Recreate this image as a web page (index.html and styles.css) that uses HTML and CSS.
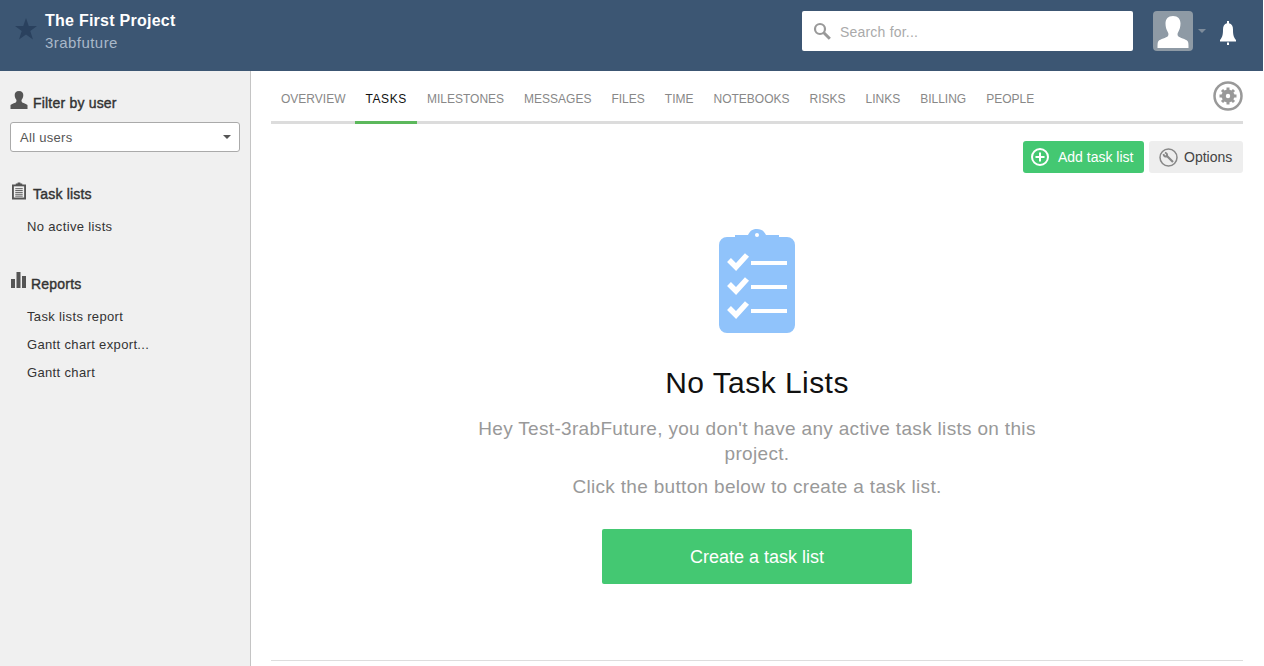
FILE: index.html
```html
<!DOCTYPE html>
<html>
<head>
    <meta charset="UTF-8">
    <meta name="viewport" content="width=device-width, initial-scale=1.0">
    <title>The First Project - Tasks</title>
    <link rel="stylesheet" href="styles.css">
</head>
<body>
    <header class="topbar">
        <svg class="star" viewBox="0 0 24 24"><path d="M12 0l3 8.800h9l-7.300 5.500 2.900 9.200-7.600-5.600-7.600 5.600 2.900-9.200L0 8.800h9z"/></svg>
        <div class="project">
            <div class="project-name">The First Project</div>
            <div class="project-company">3rabfuture</div>
        </div>
        <div class="search">
            <svg class="search-icon" viewBox="0 0 18 18"><circle cx="7" cy="7" r="5" fill="none" stroke="#999" stroke-width="2.200"/><path d="M10.800 10.800l6 6" stroke="#999" stroke-width="3"/></svg>
            <span class="search-text">Search for...</span>
        </div>
        <div class="avatar">
            <svg viewBox="0 0 40 40"><path fill="#fff" d="M20 5c-5 0-7.500 3-7.500 7.500 0 3 .8 6 2 8 1 1.500 1.300 3 .5 4.500-1.500 2-8 3-9.500 5-1 1.300-1 3-1 7h31c0-4 0-5.700-1-7-1.500-2-8-3-9.500-5-.8-1.500-.5-3 .5-4.500 1.200-2 2-5 2-8C27.500 8 25 5 20 5z"/></svg>
        </div>
        <span class="avatar-caret"></span>
        <svg class="bell" viewBox="0 0 16 24"><path fill="#fff" d="M7 0h2v2.200c3 .6 4 3 4 6.300 0 5 .5 7.500 3 10.500v1.500H0V19c2.500-3 3-5.500 3-10.500 0-3.300 1-5.700 4-6.300zM7 21.500h2V24H7z"/></svg>
    </header>

    <div class="layout">
        <aside class="sidebar">
            <h3 class="side-title first">
                <svg class="side-icon" viewBox="0 0 18 18"><path fill="#555" d="M9 0c-3 0-4.300 1.700-4.300 4 0 2 .8 3.600 1.500 4.600.5 1 .4 2-.5 2.800-1 .8-4.700 1.400-5.200 2.800V18h17v-3.800c-.5-1.400-4.200-2-5.200-2.800-.9-.8-1-1.800-.5-2.800.7-1 1.500-2.600 1.500-4.600C13.300 1.700 12 0 9 0z"/></svg>
                Filter by user
            </h3>
            <div class="user-select">
                <span>All users</span>
                <span class="select-caret"></span>
            </div>

            <h3 class="side-title lists">
                <svg class="side-icon" viewBox="0 0 15 18"><path fill="#555" d="M0 2h4V1h2V0h3v1h2v1h4v16H0z"/><path fill="#f0f0f0" d="M2 4h11v12H2z"/><path stroke="#555" stroke-width="1" d="M3.500 6.500h8M3.500 8.500h8M3.500 10.500h8M3.500 12.500h8M3.500 14.500h8"/></svg>
                Task lists
            </h3>
            <div class="side-link">No active lists</div>

            <h3 class="side-title reports">
                <svg class="side-icon" viewBox="0 0 15 16"><path fill="#555" d="M0 7h4v9H0zM5.500 0h4v16h-4zM11 4h4v12h-4z"/></svg>
                Reports
            </h3>
            <div class="side-link">Task lists report</div>
            <div class="side-link">Gantt chart export...</div>
            <div class="side-link">Gantt chart</div>
        </aside>

        <main class="content">
            <nav class="tabs">
                <a class="tab">OVERVIEW</a>
                <a class="tab active">TASKS</a>
                <a class="tab">MILESTONES</a>
                <a class="tab">MESSAGES</a>
                <a class="tab">FILES</a>
                <a class="tab">TIME</a>
                <a class="tab">NOTEBOOKS</a>
                <a class="tab">RISKS</a>
                <a class="tab">LINKS</a>
                <a class="tab">BILLING</a>
                <a class="tab">PEOPLE</a>
                <svg class="gear" viewBox="0 0 30 30">
                    <circle cx="15" cy="15" r="13.500" fill="none" stroke="#999" stroke-width="2.500"/>
                    <circle cx="15" cy="15" r="4.500" fill="none" stroke="#999" stroke-width="4"/>
                    <path stroke="#999" stroke-width="3" d="M15 6.500v17M6.500 15h17M9 9l12 12M21 9L9 21"/>
                    <circle cx="15" cy="15" r="2.200" fill="#fff"/>
                </svg>
            </nav>

            <div class="actions">
                <button class="btn btn-green">
                    <svg class="btn-icon" viewBox="0 0 18 18"><circle cx="9" cy="9" r="8" fill="none" stroke="#fff" stroke-width="2"/><path stroke="#fff" stroke-width="2" d="M9 4.500v9M4.500 9h9"/></svg>
                    Add task list
                </button>
                <button class="btn btn-grey">
                    <svg class="btn-icon" viewBox="0 0 19 19"><circle cx="9.500" cy="9.500" r="8.500" fill="none" stroke="#888" stroke-width="1.500"/><path stroke="#888" stroke-width="2.200" d="M7 7l7 7"/><path fill="none" stroke="#888" stroke-width="1.800" d="M4.500 6c.3 2 1.500 3 3.500 2.500C8.500 6.500 7.500 5 6 4.500"/></svg>
                    Options
                </button>
            </div>

            <section class="empty">
                <svg class="empty-icon" viewBox="0 0 76 104">
                    <path fill="#90c3fb" d="M16 6h13c2-4.500 5-6 9-6s7 1.500 9 6h13v2h8a8 8 0 0 1 8 8v80a8 8 0 0 1-8 8H8a8 8 0 0 1-8-8V16a8 8 0 0 1 8-8h8z"/>
                    <circle cx="38" cy="6" r="2" fill="#fff"/>
                    <path fill="none" stroke="#fff" stroke-width="5.500" d="M10 31l7 7 11-12M10 55l7 7 11-12M10 79l7 7 11-12"/>
                    <path stroke="#fff" stroke-width="4" d="M32 34h36M32 58h36M32 82h36"/>
                </svg>
                <h2 class="empty-title">No Task Lists</h2>
                <p class="empty-text">Hey Test-3rabFuture, you don't have any active task lists on this project.</p>
                <p class="empty-text hint">Click the button below to create a task list.</p>
                <button class="create-btn">Create a task list</button>
            </section>
            <div class="bottom-rule"></div>
        </main>
    </div>
</body>
</html>
```

FILE: styles.css
```css
* {
    box-sizing: border-box;
}

html, body {
    height: 100%;
}

body {
    margin: 0;
    padding-right: 1px;
    overflow: hidden;
    background: #fff;
    font-family: "Liberation Sans", Arial, sans-serif;
    color: #333;
}

.topbar {
    display: flex;
    align-items: flex-start;
    height: 71px;
    background: #3c5673;
}

.star {
    width: 22px;
    height: 22px;
    margin: 18px 0 0 15px;
    fill: #2a415e;
}

.project {
    margin: 11px 0 0 8px;
    flex: 1;
}

.project-name {
    font-size: 16px;
    line-height: 19px;
    font-weight: bold;
    letter-spacing: .25px;
    color: #fff;
}

.project-company {
    margin-top: 4px;
    font-size: 15px;
    line-height: 18px;
    letter-spacing: .45px;
    color: #a9b8c9;
}

.search {
    display: flex;
    align-items: center;
    width: 331px;
    height: 40px;
    margin-top: 11px;
    padding-left: 11px;
    background: #fff;
    border-radius: 2px;
}

.search-icon {
    width: 18px;
    height: 18px;
}

.search-text {
    margin-left: 9px;
    padding-top: 1px;
    font-size: 14px;
    letter-spacing: .2px;
    color: #aaa;
}

.avatar {
    width: 40px;
    height: 40px;
    margin: 11px 0 0 20px;
    overflow: hidden;
    background: #8e9aa5;
    border-radius: 4px;
}

.avatar svg {
    display: block;
}

.avatar-caret {
    width: 0;
    height: 0;
    margin: 29px 0 0 5px;
    border: 4px solid transparent;
    border-top-color: #7d8b9b;
}

.bell {
    width: 16px;
    height: 24px;
    margin: 21px 27px 0 14px;
}

.layout {
    display: flex;
    height: 595px;
}

.sidebar {
    width: 251px;
    flex-shrink: 0;
    padding: 21px 10px 0;
    background: #f0f0f0;
    border-right: 1px solid #c4c4c4;
}

.side-title {
    display: flex;
    align-items: center;
    margin: 0;
    font-size: 14px;
    font-weight: normal;
    line-height: 22px;
    letter-spacing: .2px;
    color: #333;
    -webkit-text-stroke: .4px #333;
}

.side-icon {
    flex-shrink: 0;
    width: 18px;
    height: 18px;
    margin-right: 5px;
    margin-top: -6px;
}

.user-select {
    display: flex;
    align-items: center;
    justify-content: space-between;
    width: 230px;
    height: 30px;
    margin-top: 8px;
    padding: 0 8px 0 9px;
    font-size: 13px;
    letter-spacing: .3px;
    color: #555;
    background: #fff;
    border: 1px solid #aaa;
    border-radius: 3px;
}

.select-caret {
    width: 0;
    height: 0;
    border: 4px solid transparent;
    border-top-color: #555;
    margin-top: 4px;
}

.lists {
    margin-top: 31px;
}

.lists .side-icon {
    margin-left: 2px;
    margin-right: 7px;
    width: 14px;
}

.reports {
    margin-top: 37px;
}

.reports .side-icon {
    margin-left: 1px;
    width: 15px;
    height: 16px;
    margin-right: 5px;
    margin-top: -8px;
}

.side-link {
    margin-left: 17px;
    margin-top: 10px;
    font-size: 13px;
    line-height: 18px;
    letter-spacing: .35px;
    color: #333;
}

.side-title + .side-link {
    margin-top: 13px;
}

.content {
    flex: 1;
    padding: 0 20px;
    min-width: 0;
    position: relative;
}

.tabs {
    display: flex;
    height: 53px;
    border-bottom: 3px solid #dcdcdc;
}

.tab {
    height: 53px;
    padding: 20px 10px 0;
    font-size: 12px;
    line-height: 16px;
    color: #888;
}

.tab.active {
    letter-spacing: .6px;
    color: #111;
    border-bottom: 3px solid #5cb85c;
}

.gear {
    width: 30px;
    height: 30px;
    margin: 10px 0 0 auto;
}

.actions {
    display: flex;
    justify-content: flex-end;
    gap: 5px;
    margin-top: 17px;
}

.btn {
    display: flex;
    align-items: center;
    height: 32px;
    border: none;
    border-radius: 3px;
    font-family: inherit;
    font-size: 14px;
    white-space: nowrap;
}

.btn-green {
    width: 121px;
    padding: 0 0 0 8px;
    background: #44c872;
    color: #fff;
}

.btn-green .btn-icon {
    width: 18px;
    height: 18px;
    margin-right: 9px;
}

.btn-grey {
    width: 94px;
    padding: 0 0 0 10px;
    background: #eeeeee;
    color: #444;
}

.btn-grey .btn-icon {
    width: 19px;
    height: 19px;
    margin-right: 6px;
}

.empty {
    display: flex;
    flex-direction: column;
    align-items: center;
    margin-top: 56px;
}

.empty-icon {
    width: 76px;
    height: 104px;
}

.empty-title {
    margin: 32px 0 0;
    font-size: 30px;
    line-height: 36px;
    font-weight: normal;
    letter-spacing: .45px;
    color: #111;
}

.empty-text {
    width: 600px;
    margin: 15px 0 0;
    font-size: 19px;
    line-height: 25px;
    letter-spacing: .32px;
    text-align: center;
    color: #999;
}

.empty-text.hint {
    margin-top: 8px;
}

.create-btn {
    width: 310px;
    height: 55px;
    margin-top: 30px;
    padding-top: 2px;
    border: none;
    border-radius: 2px;
    background: #44c872;
    color: #fff;
    font-family: inherit;
    font-size: 18px;
}

.bottom-rule {
    position: absolute;
    left: 20px;
    right: 20px;
    bottom: 5px;
    border-top: 1px solid #ddd;
}
```
